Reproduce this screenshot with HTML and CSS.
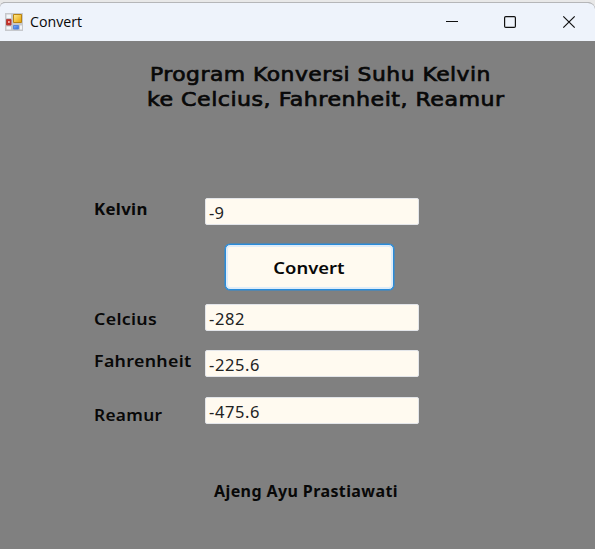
FILE: index.html
```html
<!DOCTYPE html>
<html lang="id">
<head>
<meta charset="utf-8">
<title>Convert</title>
<link rel="stylesheet" href="styles.css">
</head>
<body>
<div class="window">
  <header class="titlebar">
    <svg class="app-icon" width="18" height="18" viewBox="0 0 18 18">
      <defs>
        <linearGradient id="gold" x2="1" y2="1"><stop stop-color="#ffeb91"/><stop offset="1" stop-color="#e6a000"/></linearGradient>
        <linearGradient id="blue" x2="1" y2="1"><stop stop-color="#86b5ff"/><stop offset="1" stop-color="#2865d8"/></linearGradient>
      </defs>
      <path d="M0 0h18v18H0z" fill="#c6c8cc"/>
      <path d="M1.500 1.500h4.500v3.500H1.500zM1.500 13.500h4.500v3H1.500zM15 12.500h2v4h-2z" fill="#f3f5f8"/>
      <path d="M8.500 1.500h8v8h-8z" fill="url(#gold)" stroke="#b98310"/>
      <path d="M1.500 6.500h4.500v5.500H1.500z" fill="#c52c26" stroke="#b1413c"/>
      <path d="M3 8h1.800v2H3z" fill="#f3aaa4"/>
      <path d="M8.500 12.500h5v3.500h-5z" fill="url(#blue)" stroke="#5685d8"/>
    </svg>
    <span class="caption">Convert</span>
    <svg class="controls" width="126" height="14" viewBox="0 0 126 14" fill="none" stroke="#111" stroke-width="1.200">
      <path d="M0 6.500h12"/>
      <rect x="58.600" y="1.600" width="10.800" height="10.800" rx="1.200"/>
      <path d="M117.300 1.300l11.400 11.400M128.700 1.300l-11.400 11.400"/>
    </svg>
  </header>
  <main class="form">
    <h1 class="heading"><span class="line first">Program Konversi Suhu Kelvin</span><span class="line second">ke Celcius, Fahrenheit, Reamur</span></h1>
    <div class="row kelvin"><label class="label" for="k">Kelvin</label><input class="field" id="k" value="-9"></div>
    <button class="convert"><span class="convert-text">Convert</span></button>
    <div class="row celcius"><label class="label" for="c">Celcius</label><input class="field" id="c" value="-282"></div>
    <div class="row fahrenheit"><label class="label" for="f">Fahrenheit</label><input class="field" id="f" value="-225.6"></div>
    <div class="row reamur"><label class="label" for="r">Reamur</label><input class="field" id="r" value="-475.6"></div>
    <footer class="author">Ajeng Ayu Prastiawati</footer>
  </main>
</div>
</body>
</html>
```
FILE: styles.css
```css
* { box-sizing: border-box; }
body { margin: 0; background: #e8e8e8; overflow: hidden; }
.window {
  height: 547px;
  margin-top: 2px;
  border-top: 1px solid #b5b6b8;
  border-radius: 5px 7px 0 0;
  overflow: hidden;
  background: #808080;
  color: #080808;
  font-family: "Noto Sans", sans-serif;
}
.titlebar {
  display: flex;
  align-items: center;
  height: 38px;
  padding: 0 20px 0 5px;
  background: #eef3fb;
}
.app-icon { display: block; }
.caption { margin-left: 7px; font: 14.200px/20px "Open Sans", sans-serif; }
.controls { display: block; margin-left: auto; margin-right: 3px; overflow: visible; }
.form { display: flex; flex-direction: column; height: 508px; }
.heading {
  margin: 21px 0 0;
  font: 400 20px/25px "DejaVu Sans", sans-serif;
  -webkit-text-stroke: 0.700px #080808;
}
.line {
  display: block;
  width: max-content;
  white-space: nowrap;
  letter-spacing: 0.450px;
  transform-origin: left;
}
.first { margin-left: 150px; transform: scaleX(1.092); }
.second { margin-left: 147px; transform: scaleX(1.105); }
.row {
  display: grid;
  grid-template-columns: 110px 214px;
  height: 27px;
  margin-left: 95px;
}
.label {
  justify-self: start;
  align-self: start;
  margin-left: -1px;
  font: 600 16px/22px "Noto Sans", sans-serif;
  letter-spacing: 0.300px;
  transform: scaleX(1.110);
  transform-origin: left;
}
.kelvin .label { font-weight: 700; transform: scaleX(1.050); }
.celcius .label { margin-top: 4px; }
.reamur .label { margin-top: 7px; transform: scaleX(1.080); }
.field {
  width: 214px;
  height: 27px;
  padding: 2px 3px 0;
  border: 1px solid #e3e5e9;
  border-radius: 2px;
  outline: 0;
  background: #fffaf0;
  color: #222;
  font: 16.500px/22px "Noto Sans", sans-serif;
  letter-spacing: 0.600px;
}
.kelvin .field { letter-spacing: 0.200px; }
.kelvin { margin-top: 86px; }
.convert {
  width: 169px;
  height: 46px;
  margin: 19px 0 0 225px;
  padding: 1px 0 0;
  border: 1.500px solid #298bd9;
  border-radius: 5px;
  background: #fffaf0;
  box-shadow: 0 0 0 0.500px #298bd9, inset 0 0 0 2px #dfecf8;
  color: #080808;
  font: 600 16px/22px "Noto Sans", sans-serif;
}
.convert-text { display: inline-block; margin-left: -2px; transform: scaleX(1.150); }
.celcius { margin-top: 14px; }
.fahrenheit { margin-top: 19px; }
.reamur { margin-top: 20px; }
.author {
  margin: 56px 0 0 214px;
  font: 700 16px/22px "Noto Sans", sans-serif;
  letter-spacing: 0.400px;
  white-space: nowrap;
}
```
